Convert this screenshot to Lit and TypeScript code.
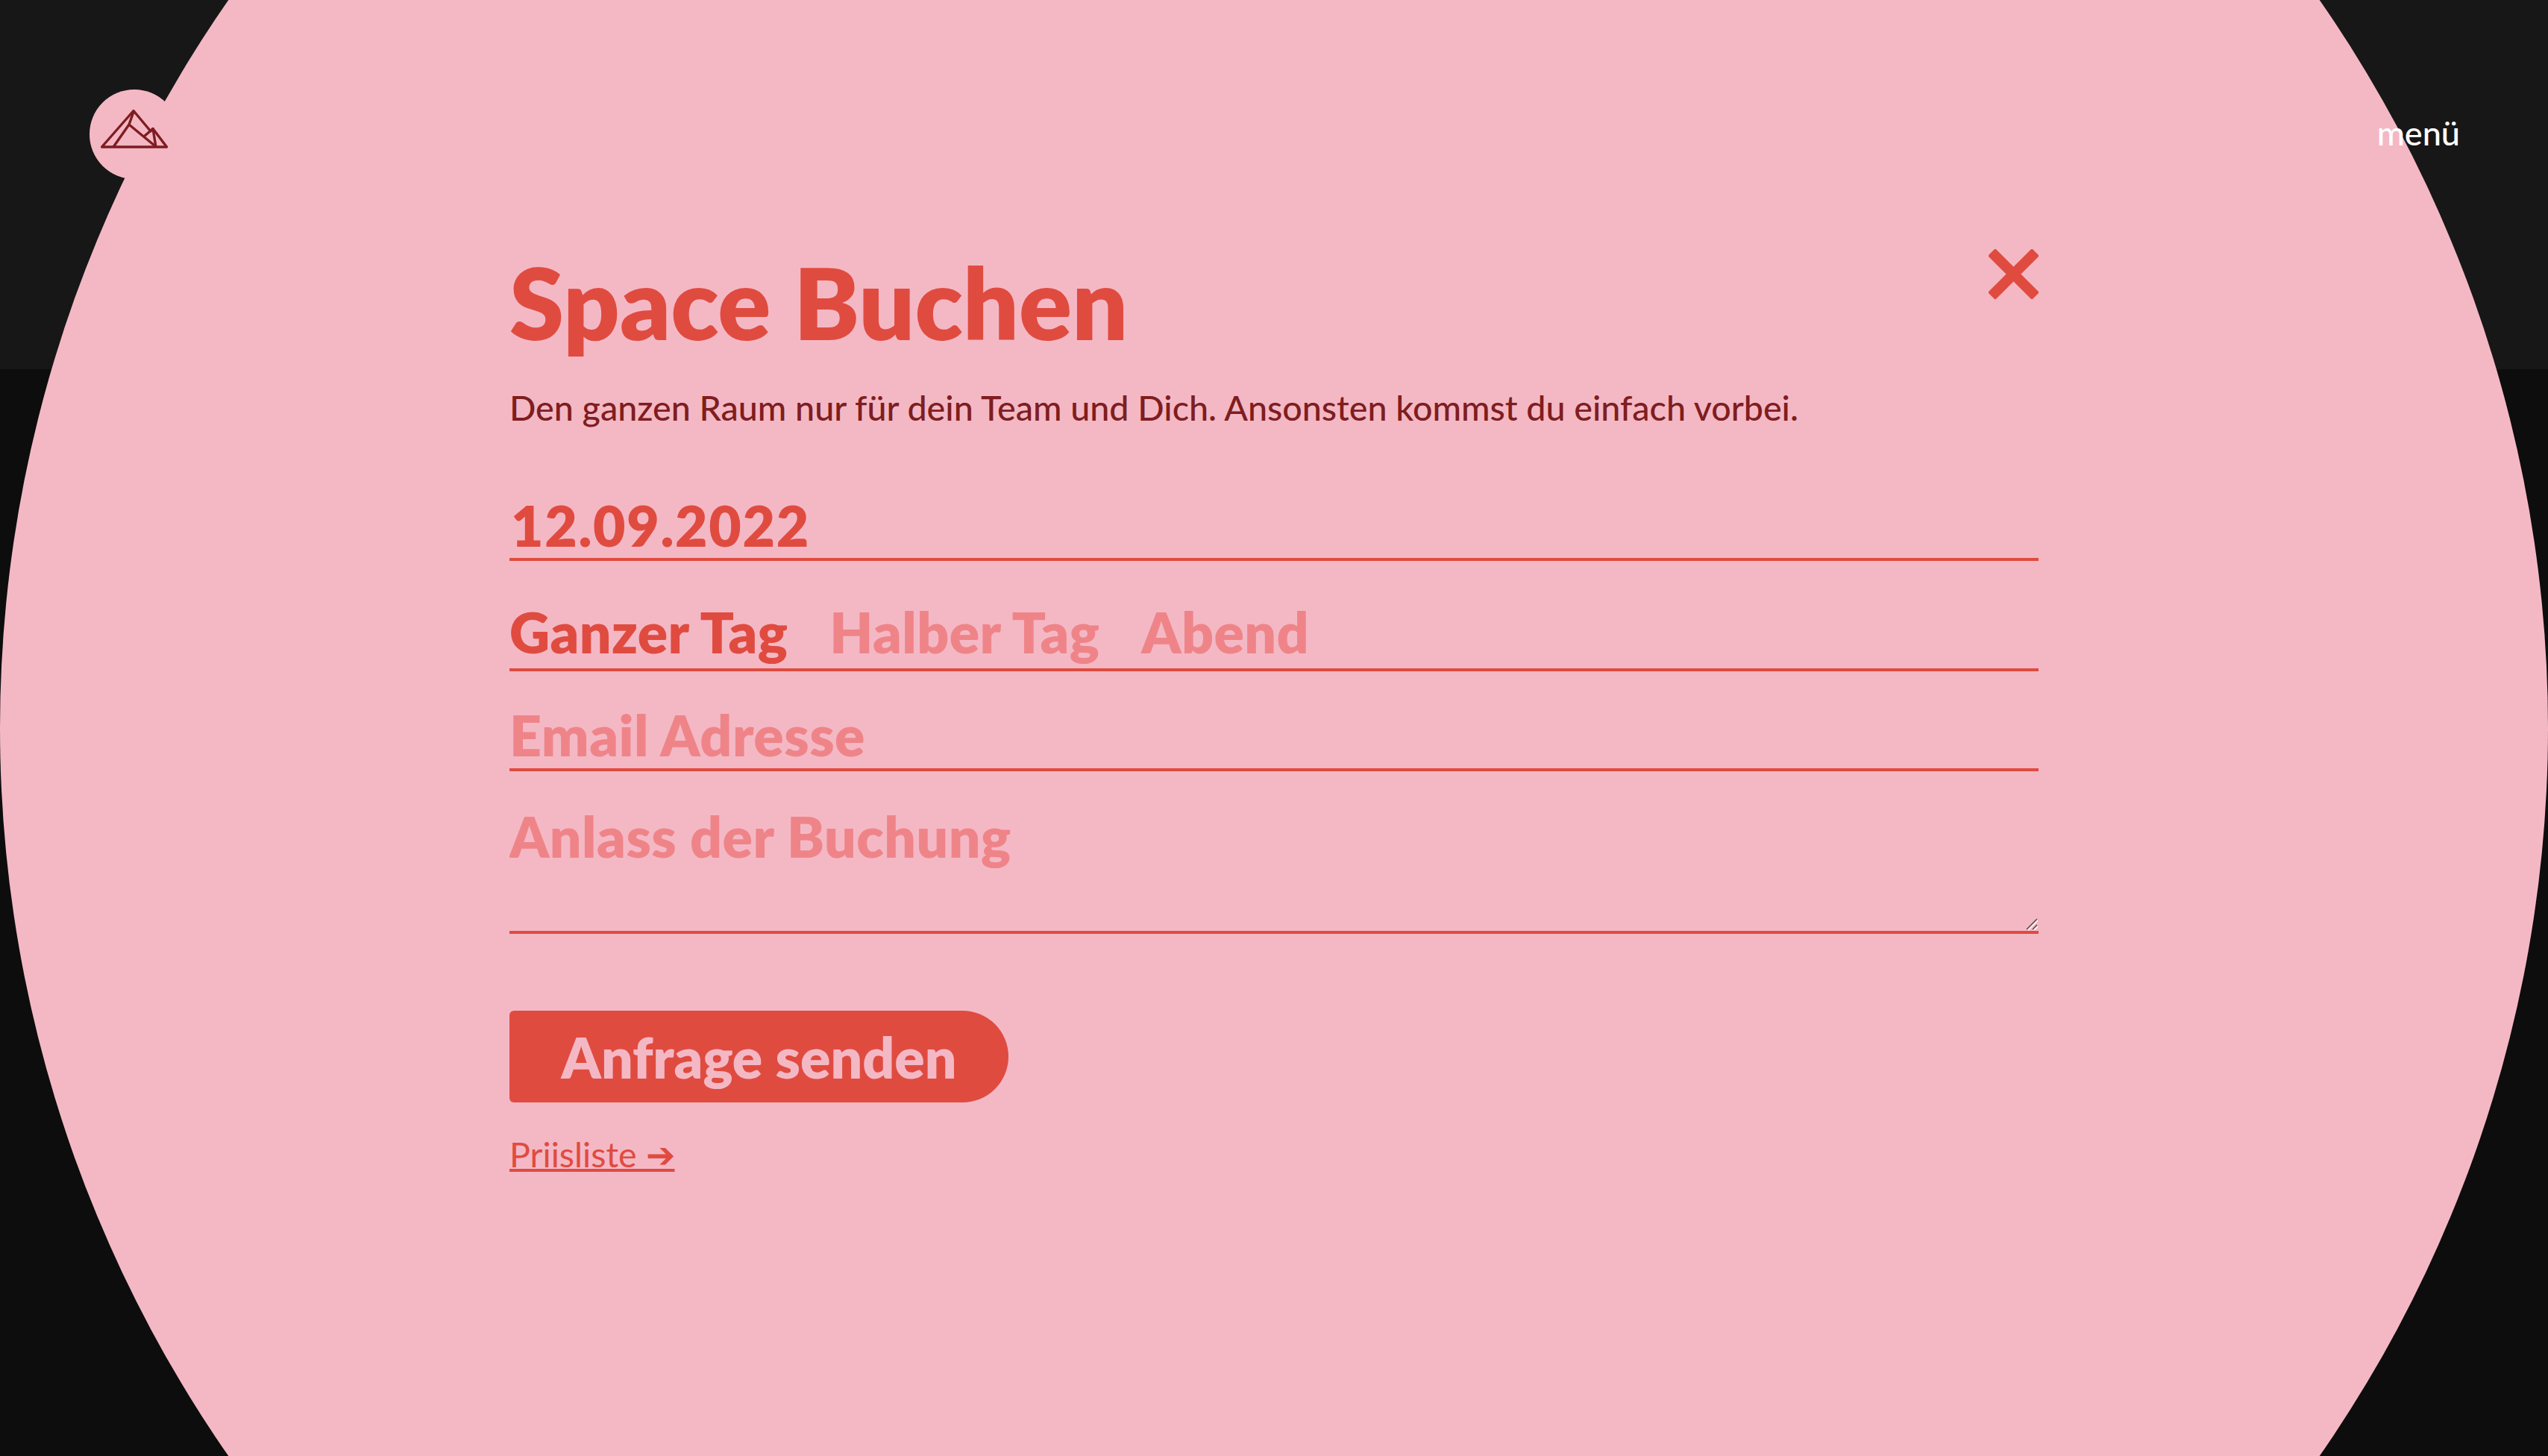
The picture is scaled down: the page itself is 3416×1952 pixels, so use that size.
import { LitElement, css, html } from "lit";
import { customElement, state } from "lit/decorators.js";
import { classMap } from "lit/directives/class-map.js";

const SLOTS = ["Ganzer Tag", "Halber Tag", "Abend"];

@customElement("app-root")
export class AppRoot extends LitElement {
  @state()
  private slot = "Ganzer Tag";

  render() {
    return html`
      <header class="band">
        <a class="logo" href="#" aria-label="Start">
          <svg width="90" height="52" viewBox="134 147 90 52" fill="none" stroke="#7f1d20" stroke-width="3.400" stroke-linejoin="round">
            <path d="M178 148.500L135.500 197H222.500L204 172.500L201 176L178 148.500Z" />
            <path d="M151 197L172 167L178 150" />
            <path d="M172 167L206 195" />
            <path d="M192 183L204 172.500L208 197" />
          </svg>
        </a>
        <a class="menu" href="#">menü</a>
      </header>

      <div class="disc"></div>

      <main class="modal">
        <div class="head">
          <h1>Space Buchen</h1>
          <button class="close" aria-label="Schliessen">
            <svg width="67" height="67" viewBox="0 0 67 67" stroke="#e04b40" stroke-width="14">
              <path d="M4 4L63 63M63 4L4 63" />
            </svg>
          </button>
        </div>
        <p class="lead">Den ganzen Raum nur für dein Team und Dich. Ansonsten kommst du einfach vorbei.</p>

        <form>
          <input class="field date" type="text" value="12.09.2022" />
          <div class="slots">
            ${SLOTS.map(
              (name) => html`<button
                type="button"
                class=${classMap({ slot: true, active: name === this.slot })}
                @click=${() => (this.slot = name)}
              >${name}</button>`
            )}
          </div>
          <input class="field email" type="email" placeholder="Email Adresse" />
          <div class="reason-wrap">
            <textarea class="field reason" placeholder="Anlass der Buchung"></textarea>
            <svg class="grip" width="16" height="16" viewBox="0 0 16 16" fill="none">
              <path d="M2 15L15 2M10 15L15 10" stroke="#fff" stroke-width="1.500" transform="translate(1 1)" />
              <path d="M1 15L15 1M9 15L15 9" stroke="#5a4a4e" stroke-width="1.500" />
            </svg>
          </div>
          <button class="send" type="button">Anfrage senden</button>
        </form>
        <a class="prices" href="#">Priisliste ➔</a>
      </main>
    `;
  }

  public static override styles = css`
    :host {
      --pink: #f4b8c5;
      --red: #e04b40;
      --soft: #ef8488;
      --dark: #7f1d20;
      display: block;
      position: relative;
      height: 1952px;
      overflow: hidden;
      background: #0d0d0d;
      font-family: "Lato", "Open Sans", sans-serif;
    }
    .band {
      display: flex;
      justify-content: space-between;
      align-items: flex-start;
      box-sizing: border-box;
      height: 495px;
      padding: 120px 118px 0 120px;
      background: #171717;
    }
    .logo {
      position: relative;
      z-index: 2;
      display: flex;
      align-items: center;
      justify-content: center;
      box-sizing: border-box;
      width: 120px;
      height: 120px;
      padding-bottom: 15px;
      border-radius: 50%;
      background: var(--pink);
    }
    .menu {
      position: relative;
      z-index: 2;
      margin-top: 28px;
      font-size: 45px;
      line-height: 60px;
      font-weight: 500;
      color: #fff;
      text-decoration: none;
    }
    .disc {
      position: absolute;
      left: 0;
      top: -732px;
      width: 3416px;
      height: 3416px;
      border-radius: 50%;
      background: var(--pink);
    }
    .modal {
      position: absolute;
      inset: 0;
      z-index: 1;
      box-sizing: border-box;
      padding: 330px 683px 0 683px;
      pointer-events: none;
    }
    .modal > * {
      pointer-events: auto;
    }
    .head {
      display: flex;
      justify-content: space-between;
      align-items: flex-start;
      height: 174px;
    }
    h1 {
      margin: 0;
      font-size: 132px;
      line-height: 150px;
      font-weight: 800;
      color: var(--red);
    }
    .close {
      margin-top: 4px;
      padding: 0;
      border: 0;
      background: none;
      line-height: 0;
    }
    .lead {
      margin: 14px 0 0;
      font-size: 46.600px;
      line-height: 56px;
      font-weight: 500;
      color: var(--dark);
    }
    form {
      display: flex;
      flex-direction: column;
      align-items: flex-start;
      margin-top: 84px;
    }
    .field {
      display: block;
      box-sizing: border-box;
      width: 100%;
      margin: 0;
      padding: 0;
      border: 0;
      border-bottom: 4px solid var(--red);
      border-radius: 0;
      outline: none;
      background: transparent;
      font: 800 75px/86px "Lato", "Open Sans", sans-serif;
      letter-spacing: 0.5px;
      color: var(--red);
    }
    .field::placeholder {
      color: var(--soft);
      opacity: 1;
    }
    .date {
      height: 94px;
      padding: 2px 0 0 2px;
      letter-spacing: 1.700px;
    }
    .slots {
      display: flex;
      gap: 56px;
      box-sizing: border-box;
      width: 100%;
      height: 102px;
      margin-top: 46px;
      border-bottom: 4px solid var(--red);
    }
    .slot {
      padding: 0;
      border: 0;
      background: none;
      font: 800 75px/86px "Lato", "Open Sans", sans-serif;
      letter-spacing: 0.4px;
      color: var(--soft);
    }
    .slot.active {
      color: var(--red);
    }
    .email {
      height: 98px;
      margin-top: 36px;
      padding-top: 4px;
    }
    .reason-wrap {
      position: relative;
      width: 100%;
      margin-top: 40px;
    }
    .reason {
      height: 178px;
      padding-top: 4px;
      resize: none;
    }
    .grip {
      position: absolute;
      right: 1px;
      bottom: 5px;
    }
    .send {
      width: 669px;
      height: 123px;
      margin-top: 103px;
      padding: 0;
      border: 0;
      border-radius: 6px 62px 62px 6px;
      background: var(--red);
      font: 800 75px/86px "Lato", "Open Sans", sans-serif;
      color: var(--pink);
    }
    .prices {
      display: inline-block;
      margin-top: 41px;
      font-size: 46.600px;
      line-height: 56px;
      color: var(--red);
      text-decoration: underline;
      text-decoration-thickness: 4px;
    }
  `;
}
